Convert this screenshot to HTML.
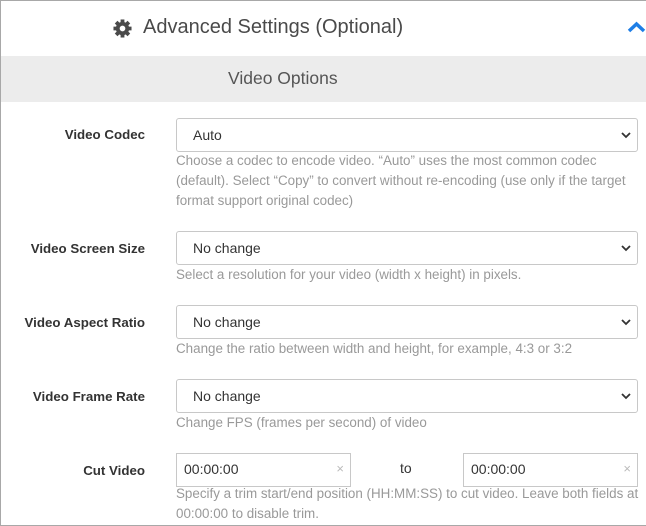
<!DOCTYPE html>
<html><head><style>
*{box-sizing:border-box;margin:0;padding:0}
body{width:646px;height:526px;overflow:hidden;background:#fff;font-family:"Liberation Sans",Arial,sans-serif;position:relative}
.frame{position:absolute;left:0;top:0;width:646px;height:526px;border:1px solid #a8a8a8;border-right:none}
.hdr{position:absolute;left:143px;top:16px;font-size:20px;color:#4a4a4a}
.band{position:absolute;left:1px;top:56px;width:645px;height:46px;background:#ececec}
.band span{position:absolute;left:227px;top:12px;font-size:17.5px;color:#555}
.lbl{position:absolute;right:501px;font-size:13.3px;font-weight:bold;color:#333;text-align:right;white-space:nowrap}
.sel{position:absolute;left:176px;width:462px;height:34px;border:1px solid #c8c8c8;border-radius:3px;font-size:14px;color:#333;padding:8px 0 0 16px}
.sel svg{position:absolute;right:6px;top:12px}
.help{position:absolute;left:176px;width:468px;font-size:13.4px;color:#999;line-height:20px}
.inp{position:absolute;top:453px;width:175px;height:34px;border:1px solid #c8c8c8;font-size:14px;color:#333;padding:7px 0 0 7px}
.inp i{position:absolute;right:6px;top:7px;font-style:normal;color:#bbb;font-size:13px}
</style></head><body>
<div class="frame"></div>
<svg style="position:absolute;left:113px;top:19px" width="19" height="19" viewBox="0 0 20 20"><g fill="#4a4a4a"><circle cx="10" cy="10" r="7"/><g stroke="#4a4a4a" stroke-width="4"><line x1="10" y1="0.5" x2="10" y2="19.5"/><line x1="0.5" y1="10" x2="19.5" y2="10"/><line x1="3.3" y1="3.3" x2="16.7" y2="16.7"/><line x1="16.7" y1="3.3" x2="3.3" y2="16.7"/></g></g><circle cx="10" cy="10" r="3" fill="#fff"/></svg>
<div class="hdr">Advanced Settings (Optional)</div>
<svg style="position:absolute;left:627px;top:21px" width="19" height="12" viewBox="0 0 19 12"><path d="M2 10 L9.5 3 L17 10" stroke="#1e7ee6" stroke-width="3.5" fill="none"/></svg>
<div class="band"><span>Video Options</span></div>

<div class="lbl" style="top:127px">Video Codec</div>
<div class="sel" style="top:118px">Auto<svg width="10" height="8" viewBox="0 0 10 8"><path d="M1 2 L5 6 L9 2" stroke="#333" stroke-width="1.8" fill="none"/></svg></div>
<div class="help" style="top:151px">Choose a codec to encode video. “Auto” uses the most common codec (default). Select “Copy” to convert without re-encoding (use only if the target format support original codec)</div>

<div class="lbl" style="top:241px">Video Screen Size</div>
<div class="sel" style="top:231px">No change<svg width="10" height="8" viewBox="0 0 10 8"><path d="M1 2 L5 6 L9 2" stroke="#333" stroke-width="1.8" fill="none"/></svg></div>
<div class="help" style="top:265px">Select a resolution for your video (width x height) in pixels.</div>

<div class="lbl" style="top:315px">Video Aspect Ratio</div>
<div class="sel" style="top:305px">No change<svg width="10" height="8" viewBox="0 0 10 8"><path d="M1 2 L5 6 L9 2" stroke="#333" stroke-width="1.8" fill="none"/></svg></div>
<div class="help" style="top:339px">Change the ratio between width and height, for example, 4:3 or 3:2</div>

<div class="lbl" style="top:389px">Video Frame Rate</div>
<div class="sel" style="top:379px">No change<svg width="10" height="8" viewBox="0 0 10 8"><path d="M1 2 L5 6 L9 2" stroke="#333" stroke-width="1.8" fill="none"/></svg></div>
<div class="help" style="top:413px">Change FPS (frames per second) of video</div>

<div class="lbl" style="top:463px">Cut Video</div>
<div class="inp" style="left:176px">00:00:00<i>×</i></div>
<div style="position:absolute;left:400px;top:460px;font-size:14px;color:#333">to</div>
<div class="inp" style="left:463px">00:00:00<i>×</i></div>
<div class="help" style="top:484px">Specify a trim start/end position (HH:MM:SS) to cut video. Leave both fields at 00:00:00 to disable trim.</div>
</body></html>
